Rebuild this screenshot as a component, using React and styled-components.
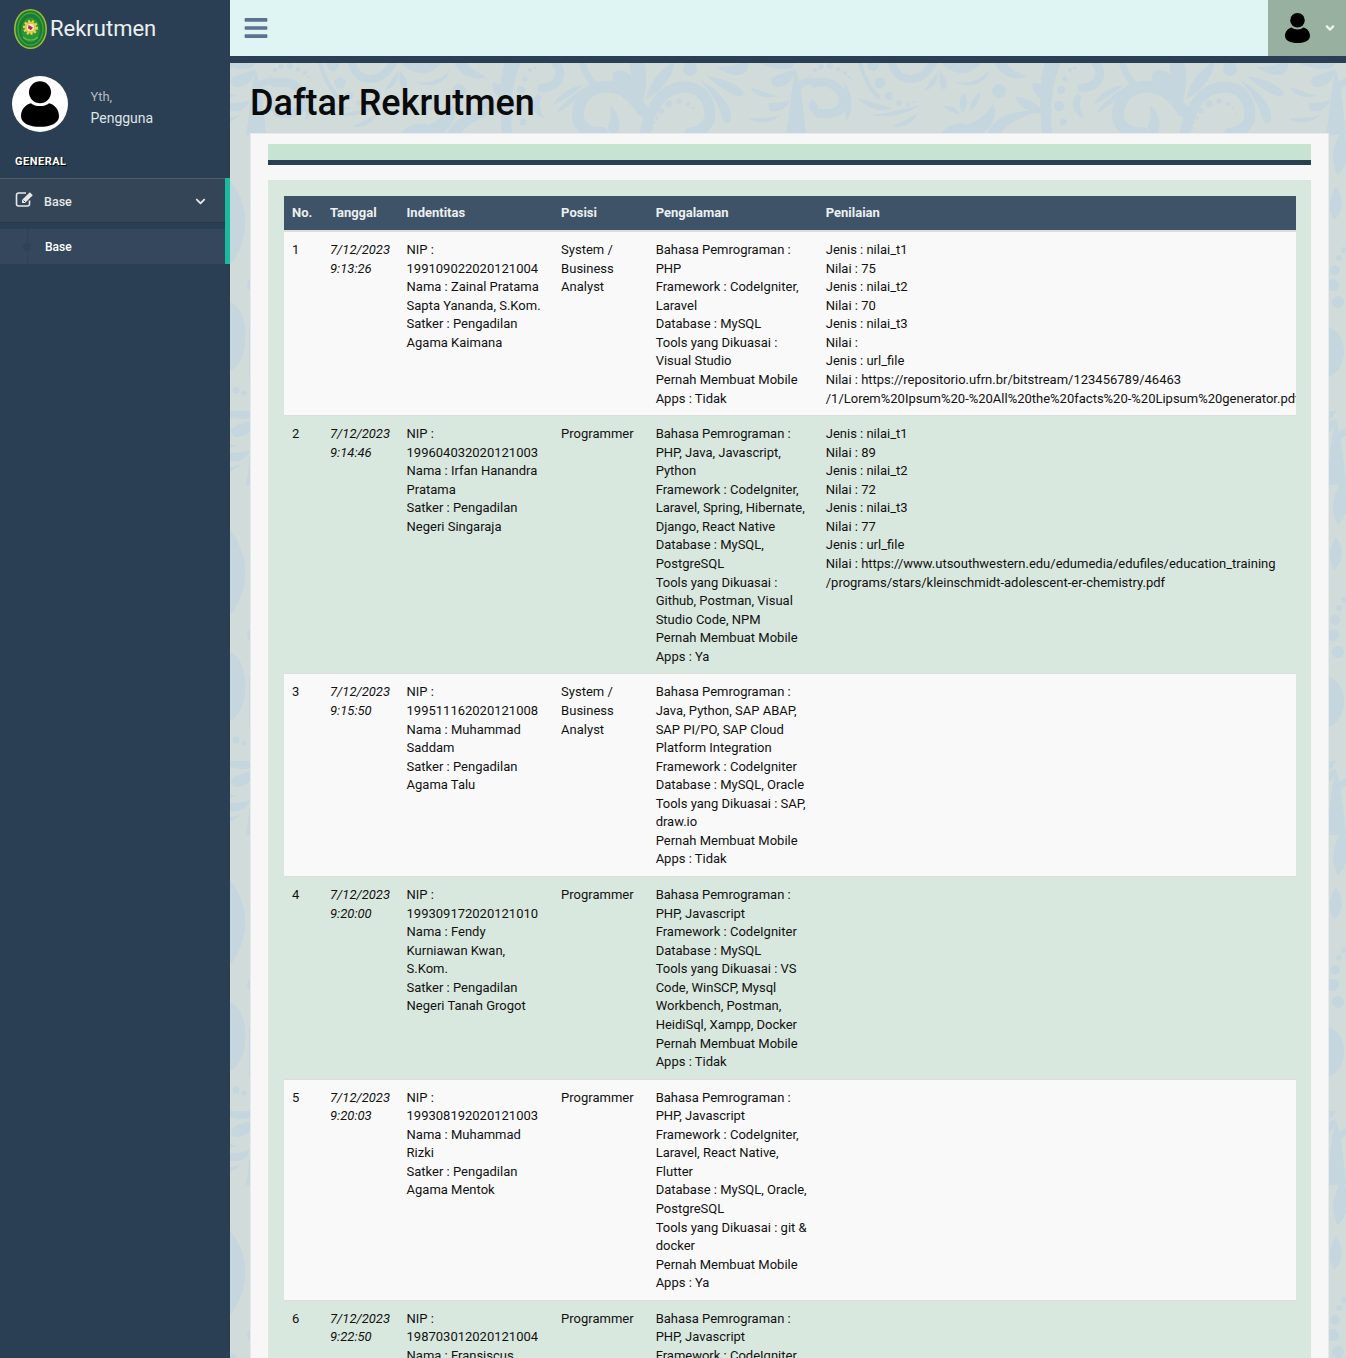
import React from "react";
import styled, { createGlobalStyle } from "styled-components";
import { FaBars, FaChevronDown, FaAngleDown } from "react-icons/fa";

const INK = "#c5d6de";

const dot = (x, y, r) => `<circle cx='${x}' cy='${y}' r='${r}' fill='${INK}'/>`;
const leaf = (d) => `<path d='${d}' fill='${INK}'/>`;
const curl = (d, w) => `<path d='${d}' fill='none' stroke='${INK}' stroke-width='${w}' stroke-linecap='round'/>`;

const ornament = [
  // left swirl and its fan
  curl("M103 48C90 28 75 22 62 24C45 26 38 40 38 52C38 64 50 72 62 70", 12),
  leaf("M70 42c8 6 12 18 8 28l-8 0c-4-4-2-8 0-12c2-6 0-10 0-16z"),
  leaf("M103 42C92 30 72 24 72 14C72 6 82 6 88 10C98 16 102 30 103 42z"),
  leaf("M103 38C96 25 88 10 90 -2L104 -2C108 10 106 28 103 38z"),
  leaf("M106 36C110 20 118 8 134 -2C134 14 120 30 106 36z"),
  dot(150, 6, 7),
  // right swirl with the dotted arc
  curl("M105 72C110 40 125 24 145 24C162 24 170 38 170 52C170 62 160 70 150 70", 11),
  dot(129, 41, 3.4), dot(121, 48, 2.7), dot(139, 38, 2.7), dot(148, 41, 2), dot(153, 45, 1.4),
  dot(117, 55, 1.7), dot(114, 60, 1), dot(113, 65, 1), dot(156, 50, 0.8),
  leaf("M167 13C185 16 200 22 204 30C204 34 196 34 190 30C182 26 172 18 167 13z"),
  leaf("M175 3C186 6 200 0 208 -2C210 8 204 13 195 12C188 11 180 7 175 3z"),
  leaf("M160 17C178 26 192 42 191 56C190 62 184 62 182 54C178 40 170 28 160 17z"),
  leaf("M43 22C30 24 18 32 13 42C22 38 36 30 43 22z"),
  leaf("M44 25C32 32 20 42 17 50C26 46 38 36 44 25z"),
  leaf("M45 -2C48 8 52 16 60 22L50 22C44 14 40 6 38 -2z"),
  // central stem
  leaf("M246 72C250 50 250 30 256 6C262 30 264 50 266 72z"),
  curl("M275 20C295 16 305 30 303 40C302 50 290 52 278 50", 9),
  leaf("M272 36c6 4 8 10 4 14c-6 0-10-6-4-14z"),
  curl("M256 30C258 22 264 18 272 18", 7),
  leaf("M210 24C222 28 232 32 238 33C228 36 214 34 210 24z"),
  leaf("M228 40C240 40 250 38 250 36C248 46 238 50 230 48z"),
  leaf("M208 55C222 56 232 54 240 52C234 60 218 62 208 55z"),
  leaf("M232 15C240 10 252 8 256 6C254 18 246 24 236 24C232 24 230 18 232 15z"),
  leaf("M215 -2C225 4 240 8 252 5L256 -2z"),
  leaf("M304 20C314 30 314 50 306 58C304 44 306 30 304 20z"),
  dot(275, 7, 2), dot(281, 4, 2.7), dot(290, 3, 3), dot(298, 6, 2.3), dot(305, 10, 2),
  dot(309, 14, 1.3), dot(312, 17, 0.8), dot(270, 13, 1), dot(268, 18, 0.8),
  // right sprig
  curl("M320 0C324 14 330 26 338 34", 4),
  dot(333, 2, 6), dot(340, 20, 5.5), dot(349, 33, 4), dot(359, 40, 3), dot(368, 42, 2), dot(374, 39, 1.3),
  leaf("M318 35C330 38 340 42 352 45C342 50 326 46 318 35z"),
  leaf("M330 52C350 50 365 46 380 42C370 50 350 56 330 52z"),
  leaf("M352 63C362 60 370 54 378 50C375 58 364 66 352 63z"),
  curl("M352 -2C354 20 382 24 394 -2", 8),
  // small fan
  leaf("M398 8C392 16 388 22 384 28C392 26 400 18 398 8z"),
  leaf("M400 8C398 18 400 24 404 27C410 22 406 14 400 8z"),
  leaf("M400 -2C410 12 430 16 443 -2z"),
  leaf("M413 18C425 22 440 18 449 8C448 18 432 28 413 18z"),
  dot(459, 28, 7),
  leaf("M453 -2C460 14 476 18 487 14C480 10 470 8 466 -2z"),
  leaf("M422 50C418 40 420 32 424 30C428 36 428 44 422 50z"),
  leaf("M430 48C430 40 434 32 440 30C440 38 436 44 430 48z"),
  leaf("M420 52C412 50 406 46 403 43C412 42 418 46 420 52z"),
  leaf("M400 72C405 62 420 58 428 62C438 58 450 48 453 40C458 50 455 62 440 72z"),
  leaf("M475 33C490 36 500 42 505 50C492 52 480 46 475 33z"),
  leaf("M493 20C500 18 506 28 510 40C500 38 490 28 493 20z"),
  leaf("M505 -2L522 -2C512 18 510 40 512 72L502 72C500 40 498 20 505 -2z"),
  leaf("M447 72C452 56 470 46 500 48C480 54 465 62 460 72z"),
  dot(525, 16, 2.6), dot(521, 27, 4), dot(519, 43, 5.3), dot(523, 59, 3.6), dot(530, 7, 2), dot(535, 5, 1.6),
  // hook over the seam of the tile
  curl("M552 -4C566 8 560 24 542 25", 9),
  leaf("M538 30C530 38 530 50 545 56C540 48 538 40 542 34z"),
  // what shows on the narrow left strip
  leaf("M230 117C248 140 252 170 232 200L225 200L225 117z"),
  leaf("M232 240C250 250 250 295 232 307L225 307L225 240z"),
  dot(233, 258, 3), dot(240, 254, 2), dot(236, 327, 3.5), dot(244, 330, 2.5),
  // and on the narrow right strip
  leaf("M262 67C272 85 270 100 258 112C250 100 252 82 262 67z"),
  leaf("M256 124C264 135 264 148 254 157C248 148 248 135 256 124z"),
  dot(259, 195, 3), dot(264, 187, 3), dot(255, 207, 5), dot(253, 222, 6), dot(258, 239, 6),
  leaf("M249 264C268 270 270 305 249 314z"),
].join("");

const damask = encodeURIComponent(
  `<svg xmlns='http://www.w3.org/2000/svg' width='540' height='350' viewBox='0 0 540 350'>
    <g>${ornament}</g>
    <g transform='translate(-540,0)'>${ornament}</g>
    <g transform='translate(0,350)'>${ornament}</g>
    <g transform='translate(-540,350)'>${ornament}</g>
  </svg>`
);

const GlobalStyle = createGlobalStyle`
  html, body {
    margin: 0;
    padding: 0;
    overflow: hidden;
  }
  body {
    font-family: Roboto, "Liberation Sans", sans-serif;
    font-size: 13px;
    line-height: 1.42857;
    color: #111;
  }
`;

const Page = styled.div`
  display: flex;
  height: 1358px;
  overflow: hidden;
`;

const Sidebar = styled.aside`
  width: 230px;
  flex: none;
  background: #2a3f54;
  color: #ecf0f1;
`;

const Brand = styled.div`
  height: 57px;
  display: flex;
  align-items: center;
  padding-left: 14px;
  gap: 3px;
  font-size: 22px;
  color: #ecf0f1;
`;

const Profile = styled.div`
  display: flex;
  align-items: center;
  gap: 22.5px;
  padding: 19px 0 0 12px;
`;

const Avatar = styled.div`
  width: 56px;
  height: 56px;
  border-radius: 50%;
  background: #fff;
  display: flex;
  align-items: center;
  justify-content: center;
  overflow: hidden;
`;

const ProfileText = styled.div`
  margin-top: 7px;
`;

const Greeting = styled.div`
  color: #b4b9bd;
  font-size: 13px;
  line-height: 22px;
`;

const UserName = styled.div`
  color: #dfe4e7;
  font-size: 14px;
  line-height: 21px;
`;

const SectionTitle = styled.h3`
  margin: 21px 0 0;
  padding-left: 15px;
  height: 25px;
  font-size: 11px;
  line-height: 18px;
  font-weight: 700;
  letter-spacing: 0.5px;
  color: #fff;
  text-shadow: 1px 1px #000;
`;

const Menu = styled.nav`
  border-right: 5px solid #1abb9c;
`;

const MenuItem = styled.div`
  height: 45px;
  box-sizing: border-box;
  border-top: 1px solid #4b5c6c;
  border-bottom: 1px solid #26394c;
  background: #334557;
  display: flex;
  align-items: center;
  padding: 2px 19px 0 15px;
  font-size: 12.5px;
  font-weight: 500;
  color: #e7e7e7;
  svg:first-child {
    margin: -5px 10px 0 0;
  }
  svg:last-child {
    font-size: 11px;
    margin-left: auto;
  }
`;

const SubMenuItem = styled.div`
  position: relative;
  height: 35px;
  box-sizing: border-box;
  margin-top: 6px;
  padding: 2px 0 0 45px;
  background: #34475c;
  display: flex;
  align-items: center;
  font-size: 12px;
  font-weight: 500;
  color: #fff;
  &::before {
    content: "";
    position: absolute;
    left: 27px;
    top: 0;
    bottom: 0;
    width: 1px;
    background: #2f4358;
  }
  &::after {
    content: "";
    position: absolute;
    left: 23px;
    top: 14px;
    width: 8px;
    height: 8px;
    border-radius: 50%;
    background: #2f4358;
  }
`;

const Main = styled.main`
  flex: 1;
  min-width: 0;
  display: flex;
  flex-direction: column;
`;

const TopBar = styled.header`
  flex: none;
  height: 56px;
  border-bottom: 7px solid #2a3f54;
  background: #dff5f3;
  display: flex;
  align-items: center;
  justify-content: space-between;
`;

const MenuToggle = styled.div`
  margin: 0 0 0 13px;
  color: #5a738e;
  font-size: 26px;
  line-height: 0;
`;

const UserBox = styled.div`
  width: 78px;
  height: 56px;
  background: #97b09f;
  display: flex;
  align-items: center;
  padding-left: 17px;
  box-sizing: border-box;
  svg:last-child {
    color: #eef4ef;
    font-size: 14px;
    margin-left: 13px;
  }
`;

const Content = styled.div`
  flex: 1;
  min-height: 0;
  background-color: #d1dbda;
  background-image: url("data:image/svg+xml,${damask}");
  background-position: 310px 0;
  padding: 20px 17px 0 20px;
`;

const Title = styled.h1`
  margin: 0 0 10px;
  font-size: 36px;
  line-height: 40px;
  font-weight: 500;
  color: #0a0a0a;
`;

const Panel = styled.section`
  background: #f7f7f7;
  border: 1px solid #e6e9ed;
  padding: 10px 17px 0;
`;

const PanelHeading = styled.div`
  height: 16px;
  background: #c7e3d2;
  border-bottom: 5px solid #2a3f54;
  margin-bottom: 15px;
`;

const TableArea = styled.div`
  background: #d9e8de;
  padding: 16px 15px 16px 16px;
`;

const Table = styled.table`
  width: 100%;
  table-layout: fixed;
  border-collapse: collapse;
`;

const HeadRow = styled.tr`
  background: #3e5367;
  color: #ecf0f1;
`;

const HeadCell = styled.th`
  height: 35px;
  box-sizing: border-box;
  padding: 1px 8px 0;
  text-align: left;
  font-weight: 700;
  font-size: 13px;
  border-bottom: 2px solid #ddd;
`;

const Row = styled.tr`
  &:nth-child(odd) {
    background: #f9f9f9;
  }
`;

const Cell = styled.td`
  padding: 9px 8px 7px;
  vertical-align: top;
  border-top: 1px solid #ddd;
  overflow: hidden;
  white-space: ${(p) => (p.$nowrap ? "nowrap" : "normal")};
  font-style: ${(p) => (p.$italic ? "italic" : "normal")};
`;

const Lines = ({ items }) =>
  items.map((line, i) => (
    <React.Fragment key={i}>
      {i > 0 && <br />}
      {line}
    </React.Fragment>
  ));

const PersonIcon = ({ size, width }) => (
  <svg width={width} height={size} viewBox="0 0 50 60">
    <circle cx="25" cy="14.5" r="14.5" fill="#000" />
    <path d="M13 29c6 5 18 5 24 0c8 2 13 9 13 17c0 9-11 14-25 14S0 55 0 46c0-8 5-15 13-17z" fill="#000" />
  </svg>
);

// pencil in an open square, heavier than the icon packages' version
const EditIcon = () => (
  <svg width="19" height="16" viewBox="0 0 19 16">
    <path d="M11 2H3.5A2 2 0 0 0 1.5 4v9a2 2 0 0 0 2 2h9a2 2 0 0 0 2-2V9.5" fill="none" stroke="#e7e7e7" strokeWidth="1.6" />
    <path d="M14.8 1.2l3 3L10 12H7v-3z" fill="#e7e7e7" />
    <path d="M8.5 9.5l1.6 1.6" stroke="#334557" strokeWidth="1" />
  </svg>
);

const Logo = () => (
  <svg width="33" height="40" viewBox="0 0 33 40">
    <ellipse cx="16.5" cy="20" rx="16.5" ry="20" fill="#a3bc3a" />
    <ellipse cx="16.5" cy="20" rx="15" ry="18.6" fill="#1c7a33" />
    <ellipse cx="16.5" cy="20" rx="12.5" ry="16" fill="none" stroke="#3fa53c" strokeWidth="1.4" />
    <ellipse cx="16.5" cy="21" rx="9.5" ry="12.5" fill="#2c9339" />
    <path d="M9 28c4 4 11 4 15 0" fill="none" stroke="#5cc04d" strokeWidth="1.2" />
    <circle cx="16.5" cy="18.5" r="6" fill="#d9c132" stroke="#e9d44a" strokeDasharray="2 1.6" strokeWidth="3" />
    <circle cx="16.5" cy="18.5" r="3.8" fill="#efe9d8" />
    <path d="M14.5 16l4.4 2.6l-2 2.6l-2.8-2z" fill="#bd2430" />
  </svg>
);

const columns = [
  { label: "No.", width: 38 },
  { label: "Tanggal", width: 76.5 },
  { label: "Indentitas", width: 154.5 },
  { label: "Posisi", width: 94.5 },
  { label: "Pengalaman", width: 170 },
  { label: "Penilaian", width: 478 },
];

const rows = [
  {
    date: ["7/12/2023", "9:13:26"],
    identity: ["NIP : 199109022020121004", "Nama : Zainal Pratama Sapta Yananda, S.Kom.", "Satker : Pengadilan Agama Kaimana"],
    position: "System / Business Analyst",
    experience: [
      "Bahasa Pemrograman : PHP",
      "Framework : CodeIgniter, Laravel",
      "Database : MySQL",
      "Tools yang Dikuasai : Visual Studio",
      "Pernah Membuat Mobile Apps : Tidak",
    ],
    scores: [
      "Jenis : nilai_t1",
      "Nilai : 75",
      "Jenis : nilai_t2",
      "Nilai : 70",
      "Jenis : nilai_t3",
      "Nilai :",
      "Jenis : url_file",
      "Nilai : https://repositorio.ufrn.br/bitstream/123456789/46463",
      "/1/Lorem%20Ipsum%20-%20All%20the%20facts%20-%20Lipsum%20generator.pdf",
    ],
  },
  {
    date: ["7/12/2023", "9:14:46"],
    identity: ["NIP : 199604032020121003", "Nama : Irfan Hanandra Pratama", "Satker : Pengadilan Negeri Singaraja"],
    position: "Programmer",
    experience: [
      "Bahasa Pemrograman : PHP, Java, Javascript, Python",
      "Framework : CodeIgniter, Laravel, Spring, Hibernate, Django, React Native",
      "Database : MySQL, PostgreSQL",
      "Tools yang Dikuasai : Github, Postman, Visual Studio Code, NPM",
      "Pernah Membuat Mobile Apps : Ya",
    ],
    scores: [
      "Jenis : nilai_t1",
      "Nilai : 89",
      "Jenis : nilai_t2",
      "Nilai : 72",
      "Jenis : nilai_t3",
      "Nilai : 77",
      "Jenis : url_file",
      "Nilai : https://www.utsouthwestern.edu/edumedia/edufiles/education_training",
      "/programs/stars/kleinschmidt-adolescent-er-chemistry.pdf",
    ],
  },
  {
    date: ["7/12/2023", "9:15:50"],
    identity: ["NIP : 199511162020121008", "Nama : Muhammad Saddam", "Satker : Pengadilan Agama Talu"],
    position: "System / Business Analyst",
    experience: [
      "Bahasa Pemrograman : Java, Python, SAP ABAP, SAP PI/PO, SAP Cloud Platform Integration",
      "Framework : CodeIgniter",
      "Database : MySQL, Oracle",
      "Tools yang Dikuasai : SAP, draw.io",
      "Pernah Membuat Mobile Apps : Tidak",
    ],
    scores: [],
  },
  {
    date: ["7/12/2023", "9:20:00"],
    identity: ["NIP : 199309172020121010", "Nama : Fendy Kurniawan Kwan, S.Kom.", "Satker : Pengadilan Negeri Tanah Grogot"],
    position: "Programmer",
    experience: [
      "Bahasa Pemrograman : PHP, Javascript",
      "Framework : CodeIgniter",
      "Database : MySQL",
      "Tools yang Dikuasai : VS Code, WinSCP, Mysql Workbench, Postman, HeidiSql, Xampp, Docker",
      "Pernah Membuat Mobile Apps : Tidak",
    ],
    scores: [],
  },
  {
    date: ["7/12/2023", "9:20:03"],
    identity: ["NIP : 199308192020121003", "Nama : Muhammad Rizki", "Satker : Pengadilan Agama Mentok"],
    position: "Programmer",
    experience: [
      "Bahasa Pemrograman : PHP, Javascript",
      "Framework : CodeIgniter, Laravel, React Native, Flutter",
      "Database : MySQL, Oracle, PostgreSQL",
      "Tools yang Dikuasai : git & docker",
      "Pernah Membuat Mobile Apps : Ya",
    ],
    scores: [],
  },
  {
    date: ["7/12/2023", "9:22:50"],
    identity: ["NIP : 198703012020121004", "Nama : Fransiscus"],
    position: "Programmer",
    experience: ["Bahasa Pemrograman : PHP, Javascript", "Framework : CodeIgniter"],
    scores: [],
  },
];

const App = () => (
  <Page>
    <GlobalStyle />
    <Sidebar>
      <Brand>
        <Logo />
        Rekrutmen
      </Brand>
      <Profile>
        <Avatar>
          <PersonIcon width={38} size={46} />
        </Avatar>
        <ProfileText>
          <Greeting>Yth,</Greeting>
          <UserName>Pengguna</UserName>
        </ProfileText>
      </Profile>
      <SectionTitle>GENERAL</SectionTitle>
      <Menu>
        <MenuItem>
          <EditIcon />
          Base
          <FaChevronDown />
        </MenuItem>
        <SubMenuItem>Base</SubMenuItem>
      </Menu>
    </Sidebar>
    <Main>
      <TopBar>
        <MenuToggle>
          <FaBars />
        </MenuToggle>
        <UserBox>
          <PersonIcon width={25} size={30} />
          <FaAngleDown />
        </UserBox>
      </TopBar>
      <Content>
        <Title>Daftar Rekrutmen</Title>
        <Panel>
          <PanelHeading />
          <TableArea>
            <Table>
              <colgroup>
                {columns.map((col) => (
                  <col key={col.label} width={col.width} />
                ))}
              </colgroup>
              <thead>
                <HeadRow>
                  {columns.map((col) => (
                    <HeadCell key={col.label}>{col.label}</HeadCell>
                  ))}
                </HeadRow>
              </thead>
              <tbody>
                {rows.map((row, i) => (
                  <Row key={i}>
                    <Cell>{i + 1}</Cell>
                    <Cell $italic>
                      <Lines items={row.date} />
                    </Cell>
                    <Cell>
                      <Lines items={row.identity} />
                    </Cell>
                    <Cell>{row.position}</Cell>
                    <Cell>
                      <Lines items={row.experience} />
                    </Cell>
                    <Cell $nowrap>
                      <Lines items={row.scores} />
                    </Cell>
                  </Row>
                ))}
              </tbody>
            </Table>
          </TableArea>
        </Panel>
      </Content>
    </Main>
  </Page>
);

export default App;
